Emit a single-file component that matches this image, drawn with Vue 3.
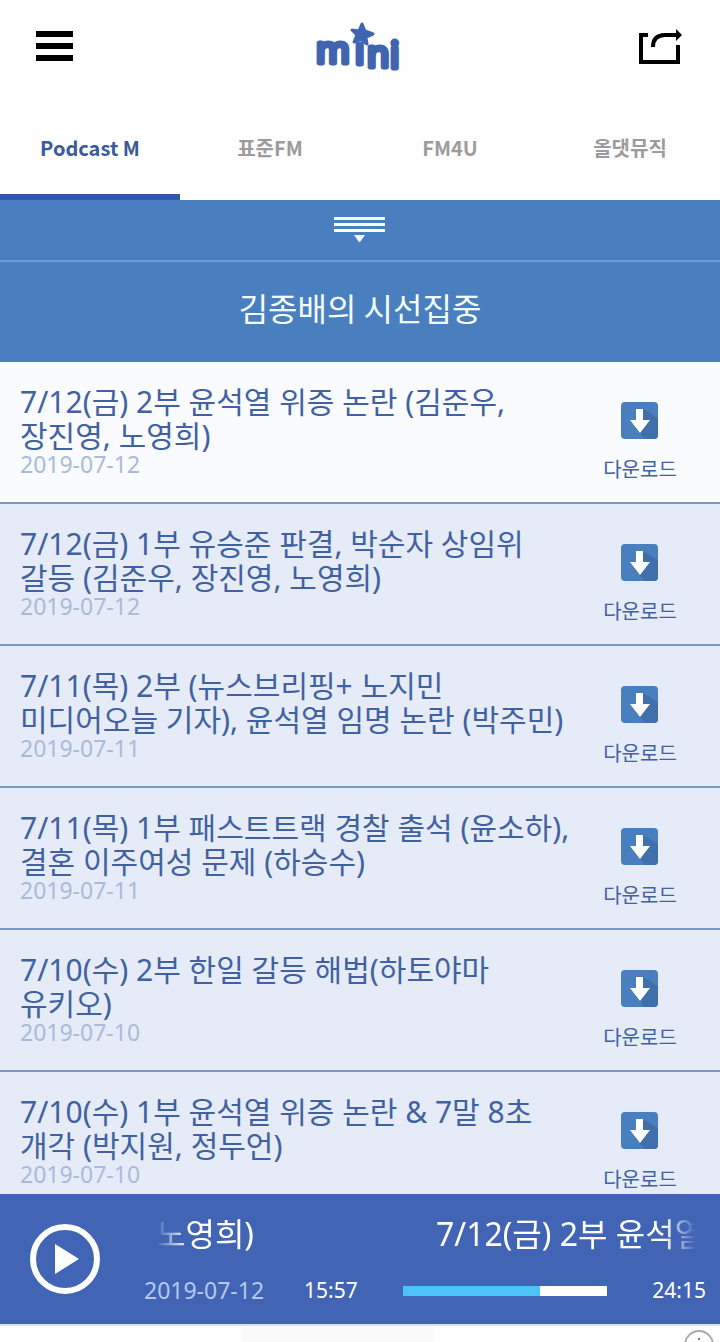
<template>
  <div class="app">
    <header class="top-bar">
      <button class="icon-btn" aria-label="메뉴">
        <svg width="37" height="30" viewBox="0 0 37 30" fill="#000">
          <rect width="37" height="6" />
          <rect y="12" width="37" height="6" />
          <rect y="24" width="37" height="6" />
        </svg>
      </button>
      <a class="logo" href="#" aria-label="mini">
        <svg width="96" height="64" viewBox="0 0 96 64">
          <g class="logo-text">
            <text x="8" y="43">m</text>
            <text x="47" y="44">ı</text>
            <text x="59" y="47">n</text>
            <text x="82" y="48">i</text>
          </g>
          <path class="logo-star" d="M54 4 L57 11 L65 14 L58 17 L59 24 L53 19 L46 22 L49 15 L44 10 L51 11 Z" />
        </svg>
      </a>
      <button class="icon-btn" aria-label="공유">
        <svg width="45" height="36" viewBox="0 0 45 36" fill="none" stroke="#000" stroke-width="4">
          <path d="M9 7H2V34H39V17" />
          <path d="M14 19C14 11 18 7 26 7H38" />
          <path d="M37 1L43 7L37 13Z" fill="#000" stroke="none" />
        </svg>
      </button>
    </header>

    <nav class="tabs">
      <button
        v-for="tab in tabs"
        :key="tab"
        class="tab"
        :class="{ active: tab === activeTab }"
        @click="activeTab = tab"
      >
        {{ tab }}
      </button>
    </nav>

    <button class="expand-btn" aria-label="펼치기">
      <svg width="52" height="26" viewBox="0 0 52 26" fill="#f4fdff">
        <rect width="51" height="3" />
        <rect y="6" width="51" height="3" />
        <rect y="12" width="51" height="3" />
        <path d="M20 18H31L26 25H25Z" />
      </svg>
    </button>
    <h1 class="program-title">김종배의 시선집중</h1>

    <ul class="episodes">
      <li
        v-for="(episode, index) in episodes"
        :key="episode.title"
        class="episode"
        :class="{ playing: index === 0 }"
      >
        <div class="episode-info">
          <h2 class="episode-title">{{ episode.title }}</h2>
          <p class="episode-date">{{ episode.date }}</p>
        </div>
        <button class="download-btn">
          <svg width="38" height="37" viewBox="0 0 38 37">
            <rect width="37" height="37" rx="4" fill="#4a7fbf" />
            <path d="M22 7L37 16V33Q37 37 33 37H24L14 26Z" fill="#416fab" />
            <path d="M15 7H22V18H29L19 31L9 18H15Z" fill="#fff" />
          </svg>
          <span>다운로드</span>
        </button>
      </li>
    </ul>

    <footer class="player">
      <button class="play-btn" aria-label="재생">
        <svg width="70" height="70" viewBox="0 0 70 70">
          <circle cx="35" cy="35" r="32" fill="none" stroke="#fff" stroke-width="6" />
          <path d="M25 20L49 35L25 50Z" fill="#fff" />
        </svg>
      </button>
      <div class="player-body">
        <div class="marquee">
          <span>노영희)</span>
          <span>7/12(금) 2부 윤석열</span>
        </div>
        <div class="timeline">
          <span class="player-date">2019-07-12</span>
          <span class="time">15:57</span>
          <input
            v-model="progress"
            class="seek"
            type="range"
            min="0"
            max="100"
            aria-label="재생 위치"
            :style="{ '--progress': progress + '%' }"
          />
          <span class="time">24:15</span>
        </div>
      </div>
    </footer>

    <div class="banner">
      <div class="banner-image"></div>
      <svg class="banner-info" width="30" height="14" viewBox="0 0 30 14">
        <circle cx="15" cy="17" r="14" fill="none" stroke="#aaa" stroke-width="2" />
        <circle cx="15" cy="11" r="1" fill="#555" />
      </svg>
    </div>
  </div>
</template>

<script setup>
import { ref } from 'vue'

const tabs = ['Podcast M', '표준FM', 'FM4U', '올댓뮤직']
const activeTab = ref('Podcast M')
const progress = ref(67)

const episodes = [
  { title: '7/12(금) 2부 윤석열 위증 논란 (김준우, 장진영, 노영희)', date: '2019-07-12' },
  { title: '7/12(금) 1부 유승준 판결, 박순자 상임위 갈등 (김준우, 장진영, 노영희)', date: '2019-07-12' },
  { title: '7/11(목) 2부 (뉴스브리핑+ 노지민 미디어오늘 기자), 윤석열 임명 논란 (박주민)', date: '2019-07-11' },
  { title: '7/11(목) 1부 패스트트랙 경찰 출석 (윤소하), 결혼 이주여성 문제 (하승수)', date: '2019-07-11' },
  { title: '7/10(수) 2부 한일 갈등 해법(하토야마 유키오)', date: '2019-07-10' },
  { title: '7/10(수) 1부 윤석열 위증 논란 & 7말 8초 개각 (박지원, 정두언)', date: '2019-07-10' }
]
</script>

<style>
body {
  margin: 0;
  background: #fff;
}
</style>

<style scoped>
.app {
  height: 100vh;
  display: flex;
  flex-direction: column;
  overflow: hidden;
  font-family: 'Noto Sans', 'Noto Sans CJK KR', sans-serif;
}

.app > * {
  flex-shrink: 0;
}

button {
  padding: 0;
  border: none;
  background: none;
  font-family: inherit;
  cursor: pointer;
}

svg {
  display: block;
}

.top-bar {
  height: 100px;
  padding: 0 36px;
  box-sizing: border-box;
  display: flex;
  align-items: flex-start;
  justify-content: space-between;
}

.icon-btn {
  height: 92px;
  display: flex;
  align-items: center;
}

.logo {
  padding-top: 20px;
}

.logo-text {
  font-size: 36px;
  font-weight: 400;
  fill: #4064b0;
  stroke: #4064b0;
  stroke-width: 5;
  stroke-linejoin: round;
}

.logo-star {
  fill: #4064b0;
  stroke: #4064b0;
  stroke-width: 3;
  stroke-linejoin: round;
}

.tabs {
  height: 100px;
  display: flex;
}

.tab {
  flex: 1;
  border-bottom: 6px solid transparent;
  color: #9c9c9c;
  font-family: 'Noto Sans CJK KR', sans-serif;
  font-size: 20px;
  font-weight: 700;
}

.tab.active {
  color: #3a5a9c;
  border-bottom-color: #3058ae;
}

.expand-btn {
  height: 62px;
  padding-top: 17px;
  display: flex;
  justify-content: center;
  background: #4a7fbf;
  border-bottom: 2px solid #6c9bd3;
}

.program-title {
  margin: 0;
  padding: 21px 20px 31px;
  text-align: center;
  background: #4a7fbf;
  color: #f4fdff;
  font-family: 'Noto Sans CJK KR', sans-serif;
  font-size: 32px;
  font-weight: 400;
  line-height: 48px;
}

.episodes {
  flex: 1 1 0;
  min-height: 0;
  margin: 0;
  padding: 0;
  list-style: none;
  overflow-y: auto;
  scrollbar-width: none;
}

.episode {
  display: flex;
  align-items: flex-start;
  padding: 23px 20px 20px;
  background: #e5ecf8;
  border-bottom: 2px solid #7799c5;
}

.episode.playing {
  background: #f9fbff;
}

.episode-info {
  flex: 1;
}

.episode-title {
  margin: 0;
  color: #4161a1;
  font-size: 30px;
  font-weight: 400;
  line-height: 34px;
  word-break: keep-all;
}

.episode-date {
  margin: 0;
  color: #a9bbdb;
  font-size: 23px;
  font-weight: 400;
  line-height: 22px;
}

.download-btn {
  width: 120px;
  padding-top: 17px;
  display: flex;
  flex-direction: column;
  align-items: center;
  gap: 19px;
  color: #4161a1;
  font-size: 20px;
  line-height: 24px;
}

.player {
  display: flex;
  align-items: center;
  padding: 0 14px 0 30px;
  height: 130px;
  background: #4165b4;
  color: #fff;
}

.play-btn {
  margin-right: 44px;
}

.player-body {
  flex: 1;
  min-width: 0;
  padding-bottom: 6px;
}

.marquee {
  display: flex;
  gap: 182px;
  margin: 0 10px 0 12px;
  overflow: hidden;
  white-space: nowrap;
  font-size: 32px;
  line-height: 48px;
  mask-image: linear-gradient(to right, transparent, #000 32px, #000 calc(100% - 32px), transparent);
}

.timeline {
  display: flex;
  align-items: center;
  margin-top: 20px;
  font-size: 21px;
  line-height: 24px;
}

.player-date {
  width: 160px;
  color: #b5c8f0;
  font-size: 23px;
}

.seek {
  flex: 1;
  min-width: 0;
  height: 10px;
  margin: 2px 45px 0 45px;
  appearance: none;
  background: linear-gradient(to right, #4bc3f6 var(--progress), #fff var(--progress));
}

.seek::-webkit-slider-thumb {
  appearance: none;
  width: 1px;
  height: 10px;
}

.banner {
  height: 16px;
  display: flex;
  justify-content: center;
  position: relative;
  border-top: 2px solid #d9e0f3;
}

.banner-image {
  width: 192px;
  margin-right: 46px;
  background: #fbfbfb;
}

.banner-info {
  position: absolute;
  top: 2px;
  right: 6px;
}
</style>
